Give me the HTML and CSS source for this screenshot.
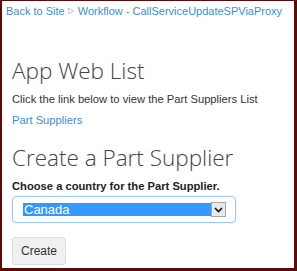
FILE: index.html
```html
<!DOCTYPE html>
<html lang="en">
<head>
  <meta charset="UTF-8">
  <title>App Web List</title>
  <link rel="stylesheet" href="styles.css">
</head>
<body>
  <div class="frame">
    <div class="breadcrumb">
      <a href="#" class="crumb">Back to Site</a>
      <span class="crumb-arrow">&#9655;</span>
      <a href="#" class="crumb">Workflow - CallServiceUpdateSPViaProxy</a>
    </div>

    <div class="content">
      <h1 class="page-title">App Web List</h1>
      <p class="intro">Click the link below to view the Part Suppliers List</p>
      <a href="#" class="list-link">Part Suppliers</a>

      <h2 class="section-title">Create a Part Supplier</h2>
      <label class="field-label">Choose a country for the Part Supplier.</label>

      <div class="select">
        <span class="select-value">Canada</span>
        <span class="select-btn">
          <svg width="9" height="6" viewBox="0 0 9 6">
            <path d="M1 1 L4.5 4.5 L8 1" fill="none" stroke="#111" stroke-width="1.6"/>
          </svg>
        </span>
      </div>

      <button class="create-btn">Create</button>
    </div>
  </div>
</body>
</html>
```

FILE: styles.css
```css
* {
  margin: 0;
  padding: 0;
  box-sizing: border-box;
}

body {
  font-family: "Liberation Sans", Arial, sans-serif;
  background: #fff;
  color: #333;
}

.frame {
  width: 297px;
  height: 271px;
  border-style: solid;
  border-color: #5c0b0b;
  border-width: 1px 3px 3px 2px;
  overflow: hidden;
}

.breadcrumb {
  display: flex;
  align-items: center;
  padding: 2px 0 0 4px;
  font-size: 11px;
  line-height: 14px;
  white-space: nowrap;
}

.crumb {
  color: #3a8ed6;
  text-decoration: none;
}

.crumb-arrow {
  color: #999;
  font-size: 8px;
  margin: 1px 4px 0 3px;
}

.content {
  padding: 0 0 0 10px;
}

.page-title,
.section-title {
  font-family: "Open Sans", sans-serif;
  font-weight: 300;
  font-size: 22.5px;
  line-height: 28px;
  color: #444;
}

.page-title {
  margin-top: 39px;
}

.intro {
  font-size: 11.2px;
  margin-top: 8px;
}

.list-link {
  display: block;
  font-size: 11.2px;
  color: #3a8ed6;
  text-decoration: none;
  margin-top: 9px;
}

.section-title {
  margin-top: 18px;
}

.field-label {
  display: block;
  font-size: 11.2px;
  font-weight: 700;
  color: #222;
  margin-top: 8px;
}

.select {
  display: flex;
  align-items: center;
  width: 224px;
  height: 27px;
  margin-top: 4px;
  padding: 0 9px 0 10px;
  border: 1px solid #9cc8f2;
  border-radius: 4px;
  box-shadow: 0 0 2px #cfe4f8;
}

.select-value {
  flex: 1;
  height: 13px;
  background: #3399ff;
  color: #fff;
  font-size: 13px;
  line-height: 13px;
  padding-left: 1px;
}

.select-btn {
  display: flex;
  align-items: center;
  justify-content: center;
  width: 15px;
  height: 15px;
  background: #e9e9e9;
  border: 1px solid #a5a5a5;
}

.create-btn {
  display: block;
  margin-top: 14px;
  width: 54px;
  height: 28px;
  font-family: "Liberation Sans", Arial, sans-serif;
  font-size: 12px;
  color: #333;
  background: #f0f0f0;
  border: 1px solid #ddd;
  border-radius: 3px;
}
```
